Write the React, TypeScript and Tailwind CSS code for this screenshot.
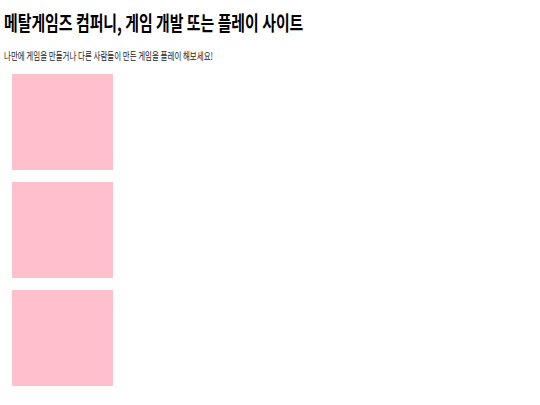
export default function App() {
  const cards = [0, 1, 2];
  return (
    <div className="w-[540px] h-[405px] bg-white overflow-hidden font-['Noto_Sans_CJK_KR',sans-serif]">
      <header className="pl-[4px] pt-[10px]">
        <h1 className="text-[20px] leading-[26px] font-bold text-black whitespace-nowrap origin-left scale-x-[0.745]">
          메탈게임즈 컴퍼니, 게임 개발 또는 플레이 사이트
        </h1>
        <p className="mt-[13px] text-[10.5px] leading-[14px] text-[#222] whitespace-nowrap origin-left scale-x-[0.714]">
          나만에 게임을 만들거나 다른 사람들이 만든 게임을 플레이 해보세요!
        </p>
      </header>
      <main className="pl-[12px] pt-[11px] flex flex-col gap-[12px]">
        {cards.map((i) => (
          <div key={i} className="w-[101px] h-[96px] bg-[#ffc0cb]" />
        ))}
      </main>
    </div>
  );
}
